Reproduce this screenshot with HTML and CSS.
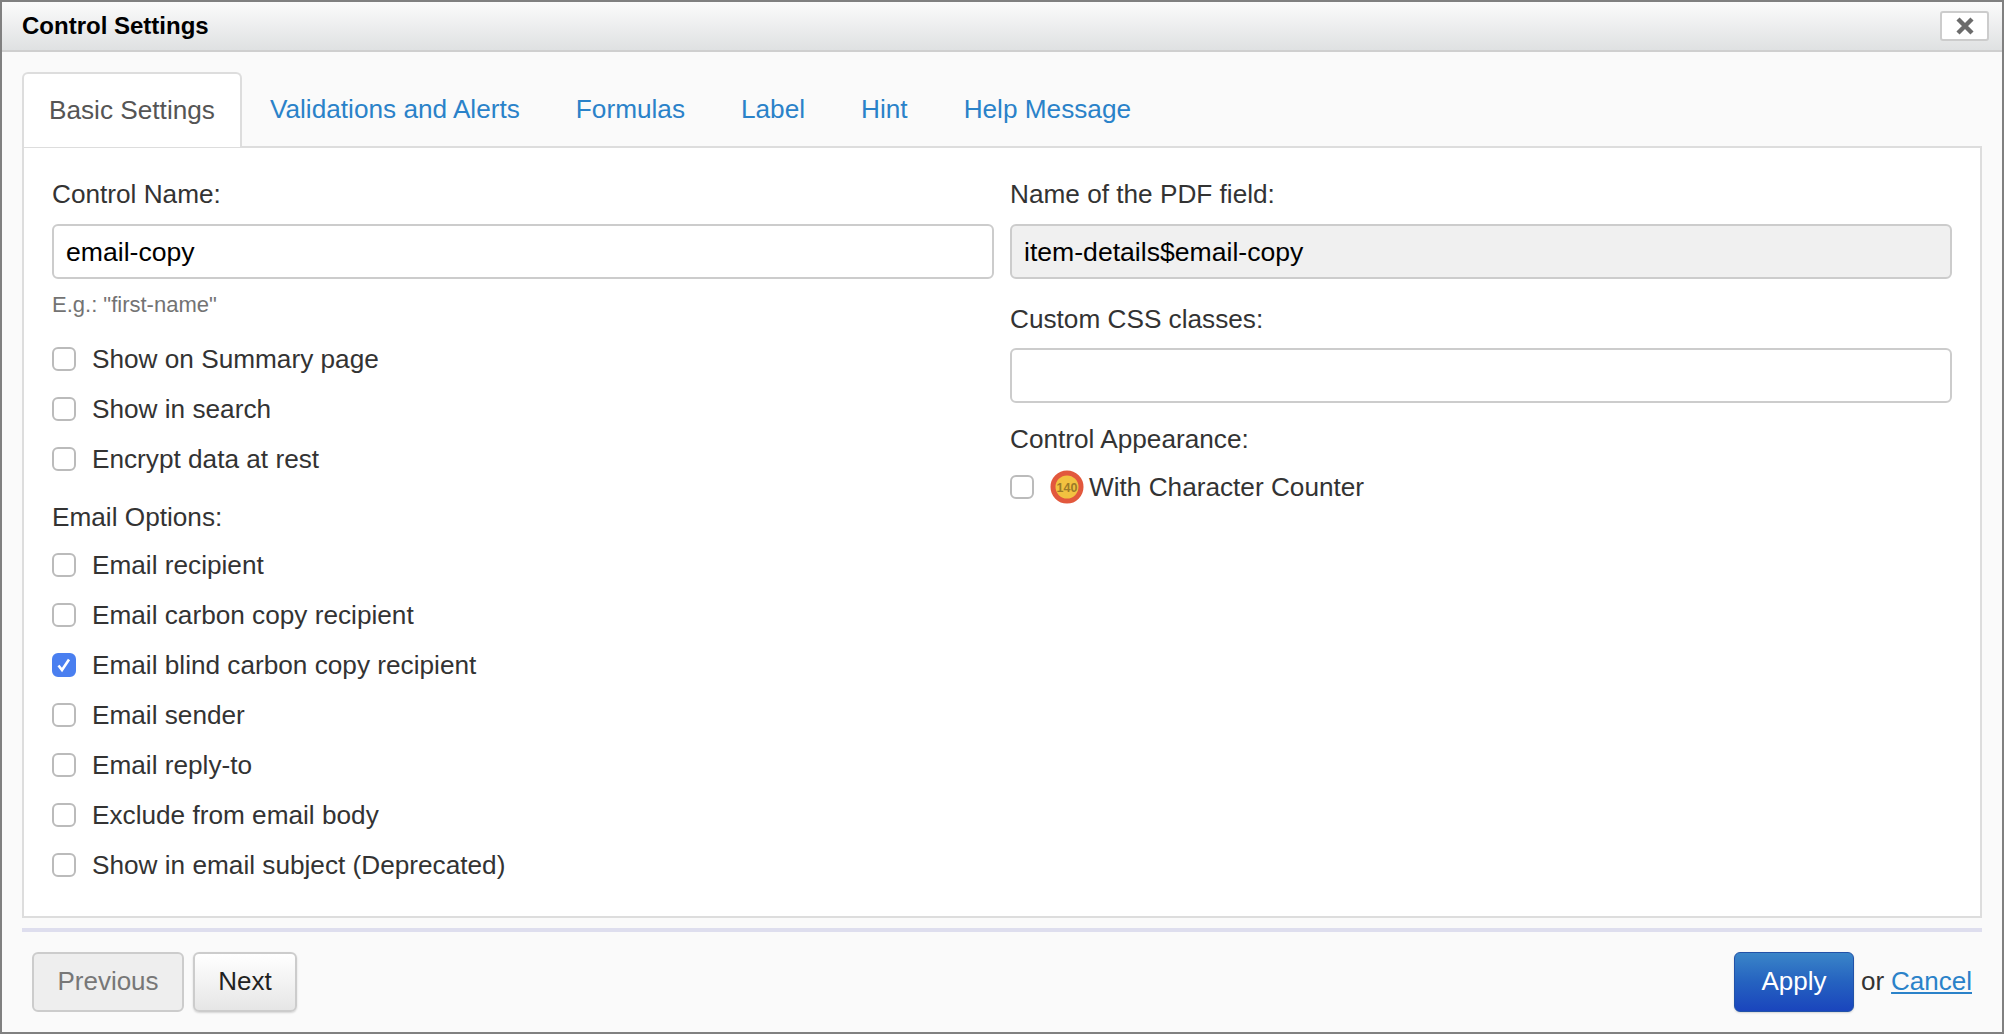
FILE: index.html
```html
<!DOCTYPE html>
<html lang="en">
<head>
<meta charset="utf-8">
<title>Control Settings</title>
<link rel="stylesheet" href="styles.css">
</head>
<body>
<div class="dialog">
  <header class="titlebar">
    <h1 class="title">Control Settings</h1>
    <button class="close" type="button" aria-label="Close">
      <svg width="18" height="18" viewBox="0 0 18 18"><path d="M2 2 16 16M16 2 2 16" stroke="#6b6b6b" stroke-width="4.4"/></svg>
    </button>
  </header>
  <div class="content">
    <nav class="tabs">
      <a class="tab active">Basic Settings</a>
      <a class="tab">Validations and Alerts</a>
      <a class="tab">Formulas</a>
      <a class="tab">Label</a>
      <a class="tab">Hint</a>
      <a class="tab">Help Message</a>
    </nav>
    <section class="panel">
      <div class="col">
        <div class="label first">Control Name:</div>
        <div class="input">email-copy</div>
        <div class="hint">E.g.: "first-name"</div>
        <div class="checks">
          <div class="check"><span class="box"></span>Show on Summary page</div>
          <div class="check"><span class="box"></span>Show in search</div>
          <div class="check"><span class="box"></span>Encrypt data at rest</div>
        </div>
        <div class="label options">Email Options:</div>
        <div class="checks email">
          <div class="check"><span class="box"></span>Email recipient</div>
          <div class="check"><span class="box"></span>Email carbon copy recipient</div>
          <div class="check"><span class="box on"><svg width="18" height="18" viewBox="0 0 18 18"><path d="M3.5 9.5 7 14 14 3.5" fill="none" stroke="#fff" stroke-width="2.6"/></svg></span>Email blind carbon copy recipient</div>
          <div class="check"><span class="box"></span>Email sender</div>
          <div class="check"><span class="box"></span>Email reply-to</div>
          <div class="check"><span class="box"></span>Exclude from email body</div>
          <div class="check"><span class="box"></span>Show in email subject (Deprecated)</div>
        </div>
      </div>
      <div class="col">
        <div class="label first">Name of the PDF field:</div>
        <div class="input readonly">item-details$email-copy</div>
        <div class="label css">Custom CSS classes:</div>
        <div class="input"></div>
        <div class="label appearance">Control Appearance:</div>
        <div class="check counter"><span class="box"></span>
          <svg class="badge" width="34" height="34" viewBox="0 0 34 34"><defs><filter id="soft" x="-10%" y="-10%" width="120%" height="120%"><feGaussianBlur stdDeviation="0.5"/></filter></defs><circle cx="17" cy="17" r="14" fill="#f2c23f" stroke="#e2583c" stroke-width="5" filter="url(#soft)"/><text x="17" y="21.5" text-anchor="middle" class="badge-text">140</text></svg>
          With Character Counter</div>
      </div>
    </section>
    <footer class="footer">
      <div class="nav-buttons">
        <button class="btn disabled" type="button">Previous</button>
        <button class="btn" type="button">Next</button>
      </div>
      <div class="actions">
        <button class="btn primary" type="button">Apply</button>
        <span class="or">or</span>
        <a class="cancel">Cancel</a>
      </div>
    </footer>
  </div>
</div>
</body>
</html>
```
FILE: styles.css
```css
* { box-sizing: border-box; }
html, body { margin: 0; height: 100%; }
body { font-family: "Liberation Sans", Arial, sans-serif; color: #333; overflow: hidden; }
.dialog { height: 1034px; width: 2004px; border: 2px solid #808080; background: #fafafa; display: flex; flex-direction: column; }
.titlebar { height: 50px; flex: none; display: flex; justify-content: space-between; align-items: center; padding: 0 13px 0 20px; background: linear-gradient(#fbfbfb, #dfe1e2); border-bottom: 2px solid #cfcfcf; }
.title { margin: 0; font-size: 24px; font-weight: 700; color: #000; }
.close { width: 49px; height: 30px; padding: 0; display: flex; align-items: center; justify-content: center; background: #fff; border: 2px solid #ccc; border-radius: 3px; }
.content { flex: 1; display: flex; flex-direction: column; padding: 20px 20px 0 20px; }
.tabs { display: flex; height: 75px; flex: none; font-size: 26.2px; }
.tab { display: flex; align-items: center; padding: 0 28px; color: #2a82c9; white-space: nowrap; }
.tab.active { color: #555; padding: 0 25px; background: #fff; border: 2px solid #ddd; border-bottom: 0; border-radius: 6px 6px 0 0; height: 75px; position: relative; z-index: 1; }
.panel { flex: none; height: 772px; margin-top: -1px; background: #fff; border: 2px solid #ddd; padding: 30px 28px 0 28px; display: grid; grid-template-columns: 942px 942px; column-gap: 16px; }
.col { display: flex; flex-direction: column; }
.label { font-size: 26.2px; line-height: 32px; color: #333; }
.input { height: 55px; border: 2px solid #ccc; border-radius: 6px; background: #fff; padding: 0 12px; font-size: 26.6px; line-height: 53px; color: #000; flex: none; }
.input.readonly { background: #f0f0f0; }
.label.first { margin-bottom: 14px; }
.label.css { margin-top: 24px; margin-bottom: 13px; }
.label.appearance { margin-top: 20px; margin-bottom: 14px; }
.hint { font-size: 22px; line-height: 26px; color: #737373; margin-top: 13px; }
.checks { display: flex; flex-direction: column; margin-top: 16px; }
.check { display: flex; align-items: center; height: 50px; font-size: 26.2px; color: #333; white-space: nowrap; }
.box { width: 24px; height: 24px; flex: none; margin-right: 16px; border: 2px solid #bbb; border-radius: 6px; background: #fff; display: flex; align-items: center; justify-content: center; }
.box.on { background: #4a7ff0; border-color: #4a7ff0; }
.label.options { margin-top: 17px; }
.checks.email { margin-top: 7px; }
.counter { height: 36px; }
.badge { margin-right: 5px; flex: none; }
.badge-text { font-family: "Liberation Sans", sans-serif; font-size: 12.5px; font-weight: 700; fill: #9c7a28; }
.footer { margin-top: 10px; flex: 1; border-top: 4px solid #dedeee; display: flex; justify-content: space-between; padding: 20px 10px 0 10px; }
.nav-buttons { display: flex; gap: 9px; }
.actions { display: flex; align-items: flex-start; }
.btn { height: 60px; padding: 0 0 2px; width: 104px; font: 26px "Liberation Sans", Arial, sans-serif; color: #222; border: 2px solid #ccc; border-radius: 6px; background: linear-gradient(#fff, #e6e6e6); box-shadow: 0 1px 2px rgba(0,0,0,.15); }
.btn.disabled { width: 152px; color: #777; background: #eee; box-shadow: none; }
.btn.primary { color: #fff; border: 1px solid #2152a8; width: 120px; background: linear-gradient(#3a85c8, #2562c0 50%, #1a45bd); box-shadow: 0 1px 2px rgba(0,0,0,.15); }
.or { font-size: 26px; line-height: 58px; margin-left: 7px; color: #333; }
.cancel { font-size: 26px; line-height: 58px; margin-left: 7px; color: #2a82c9; text-decoration: underline; }
```
